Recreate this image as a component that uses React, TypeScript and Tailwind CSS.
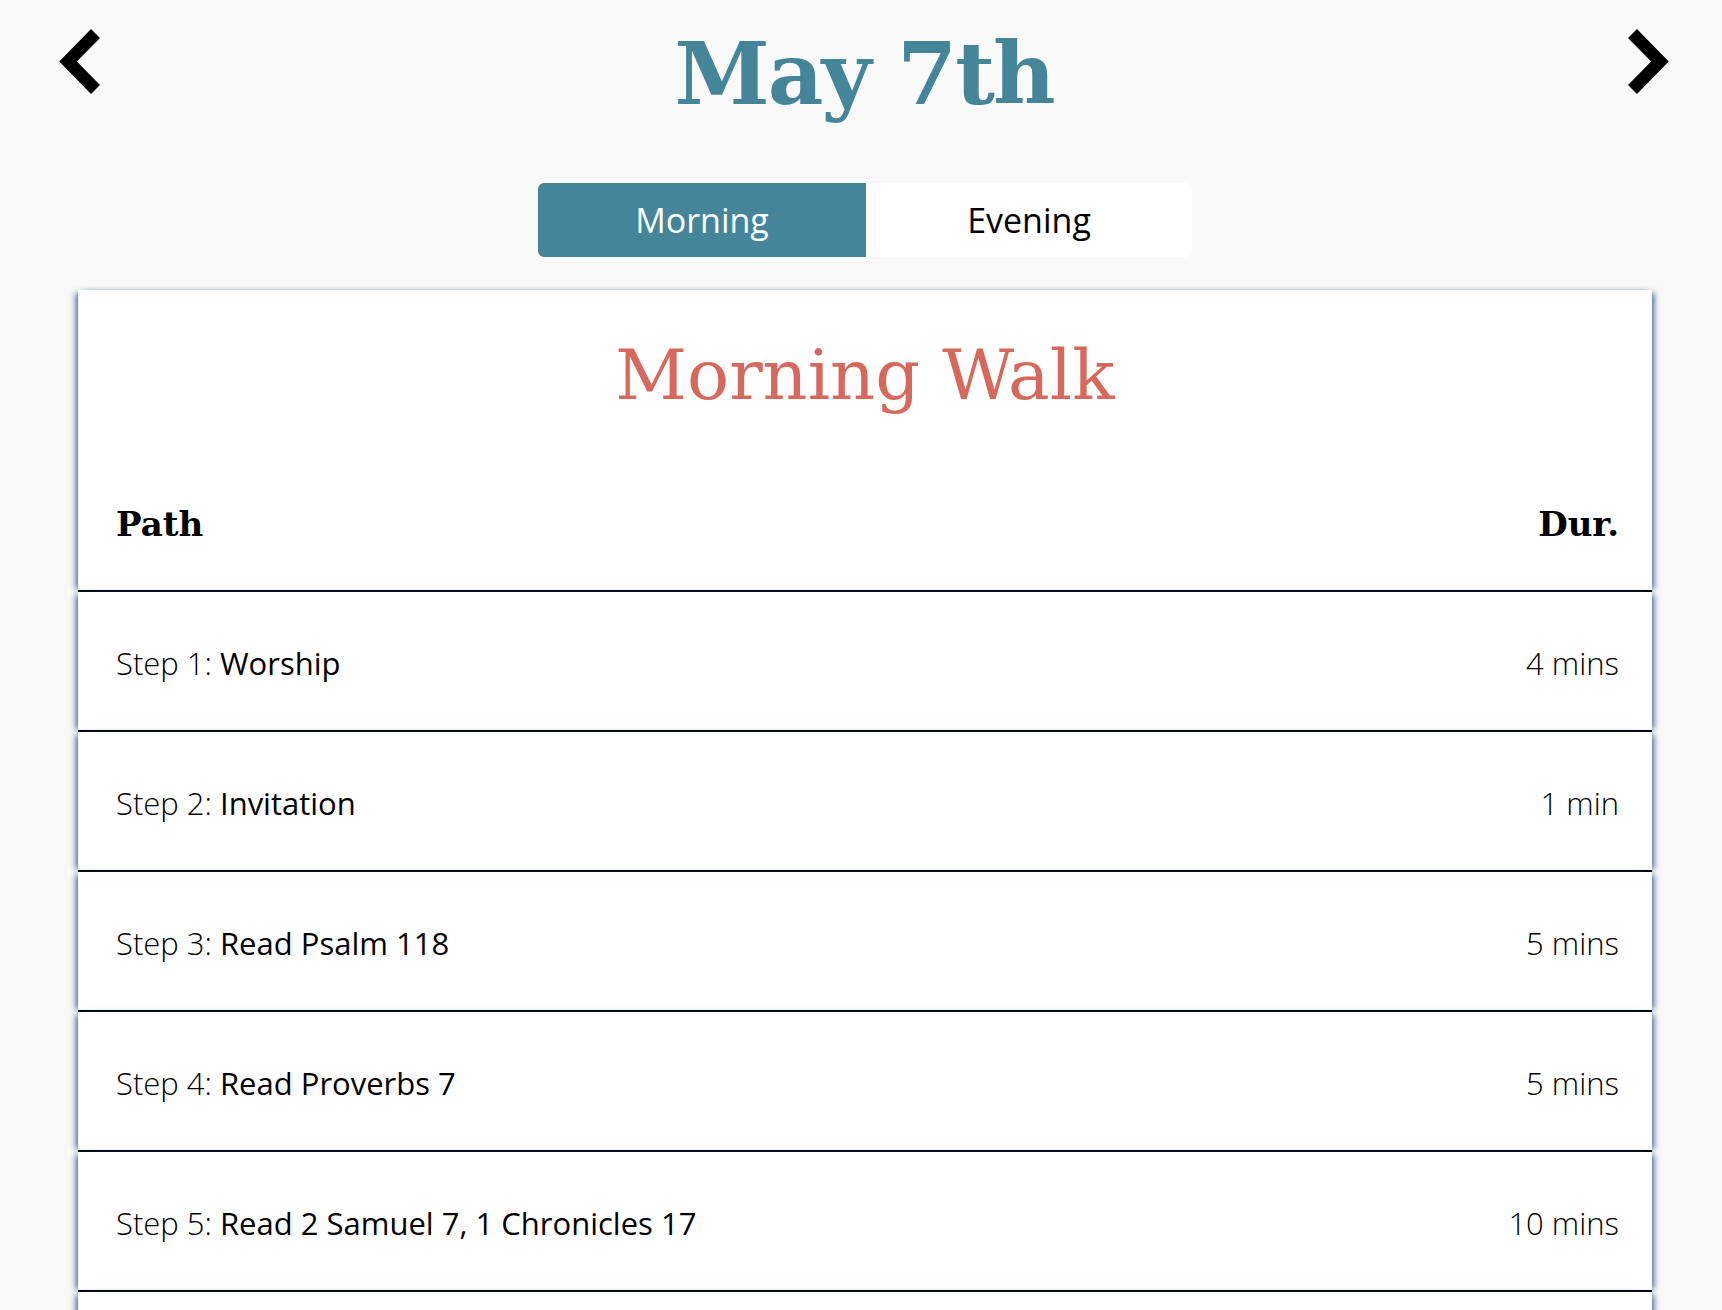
import React from "react";

type Step = {
    label: string;
    title: string;
    duration: string;
};

const steps: Step[] = [
    { label: "Step 1:", title: "Worship", duration: "4 mins" },
    { label: "Step 2:", title: "Invitation", duration: "1 min" },
    { label: "Step 3:", title: "Read Psalm 118", duration: "5 mins" },
    { label: "Step 4:", title: "Read Proverbs 7", duration: "5 mins" },
    { label: "Step 5:", title: "Read 2 Samuel 7, 1 Chronicles 17", duration: "10 mins" },
];

const slab = "font-['DejaVu_Serif',serif]";
const sans = "font-['Open_Sans',sans-serif]";
const sideShadow = "shadow-[-5px_0_6px_-3px_rgba(50,80,140,0.9),5px_0_6px_-3px_rgba(50,80,140,0.9)]";

function Chevron({ dir }: { dir: "left" | "right" }) {
    const points = dir === "left" ? "38.5,4.5 11,32.5 38.5,60.5" : "5.5,4.5 33,32.5 5.5,60.5";
    return (
        <svg width="44" height="65" viewBox="0 0 44 65" className="block">
            <polyline points={points} fill="none" stroke="#000" strokeWidth="12.5" strokeLinejoin="miter" />
        </svg>
    );
}

export default function App() {
    return (
        <div className="min-h-screen bg-[#f9f9f9] pl-2 text-black">
            <header className="flex items-start justify-between pl-[49px] pr-[51px] pt-[29px]">
                <button className="block">
                    <Chevron dir="left" />
                </button>
                <h1 className={`${slab} text-[86px] font-bold leading-none tracking-[-2px] text-[#44859a] mt-[2px]`}>
                    May 7th
                </h1>
                <button className="block">
                    <Chevron dir="right" />
                </button>
            </header>

            <div className="mt-[66px] flex justify-center">
                <div className={`${sans} flex text-[34px]`}>
                    <div className="flex h-[74px] w-[328px] items-center justify-center rounded-l-md bg-[#44859a] font-medium text-white">
                        Morning
                    </div>
                    <div className="flex h-[74px] w-[326px] items-center justify-center rounded-r-md bg-white text-black">
                        Evening
                    </div>
                </div>
            </div>

            <section className="mx-auto mt-[33px] w-[1574px]">
                <div className={`bg-white ${sideShadow}`}>
                    <h2 className={`${slab} pt-[40px] text-center text-[70px] leading-[90px] text-[#d6695c]`}>
                        Morning Walk
                    </h2>
                    <div className={`${slab} flex h-[172px] items-end justify-between border-b-2 border-black pb-[40px] pl-[38px] pr-[33px] text-[34px] font-bold`}>
                        <span>Path</span>
                        <span>Dur.</span>
                    </div>
                </div>
                {steps.map((step) => (
                    <div
                        key={step.label}
                        className={`${sans} flex h-[140px] items-center justify-between border-b-2 border-black bg-white pl-[38px] pr-[33px] pt-[4px] text-[31px] ${sideShadow}`}
                    >
                        <span>
                            <span className="font-light">{step.label} </span>
                            <span className="font-normal">{step.title}</span>
                        </span>
                        <span className="font-light">{step.duration}</span>
                    </div>
                ))}
                <div className={`h-[140px] bg-white ${sideShadow}`}></div>
            </section>
        </div>
    );
}
